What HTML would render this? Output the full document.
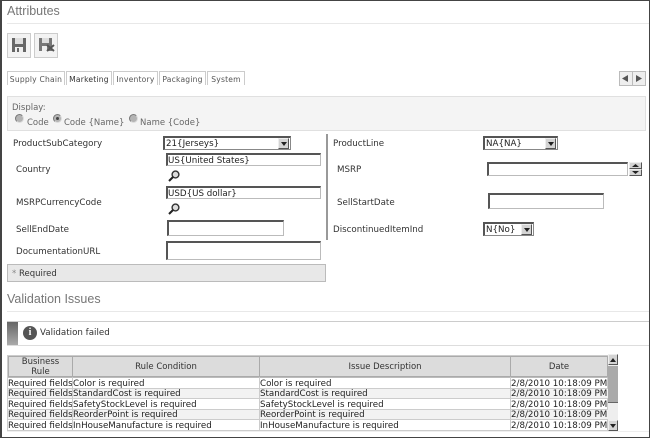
<!DOCTYPE html>
<html><head><meta charset="utf-8"><style>
html,body{margin:0;padding:0;background:#fff}
#p{position:relative;width:650px;height:438px;overflow:hidden;background:#fff;font-family:"DejaVu Sans","Liberation Sans",sans-serif;font-size:8.5px;color:#333;filter:blur(.3px)}
#p div,#p span.t,#p svg{position:absolute;box-sizing:border-box}
.t{position:absolute;white-space:nowrap;line-height:11px}
.h{position:absolute;font-size:12.5px;color:#777;font-family:"Liberation Sans",sans-serif;font-weight:normal;white-space:nowrap;line-height:14px}
.l{color:#333;font-size:8.7px}
.in{background:#fff;border:1px solid #bbb;border-top:2px solid #555;border-left:2px solid #555;font-size:8.7px;line-height:12px;color:#222;white-space:nowrap}
.sel{background:#fff;border:1px solid #888;border-top:2px solid #555;border-left:2px solid #555;font-size:8.7px;line-height:13px;color:#222;padding-left:1px;white-space:nowrap}
.ar{background:#d4d4d4;border:1px solid;border-color:#eee #555 #555 #eee}
.tab{background:#fff;border:1px solid #ccc;border-bottom:0;height:14px;font-size:7.6px;line-height:16px;color:#555;text-align:center;top:71px;letter-spacing:.2px;white-space:nowrap}
.rad{width:9px;height:9px;border-radius:50%;background:#b4b4b4;border:1px solid #777;border-right-color:#ddd;border-bottom-color:#ddd}
.c{font-size:8.7px;line-height:10.5px;color:#222;white-space:nowrap;overflow:hidden}
.hd{background:#dcdcdc;border:1px solid #aaa;font-size:8.5px;line-height:10px;color:#333;text-align:center}
</style></head><body><div id="p">

<div style="left:0;top:0;width:650px;height:1px;background:#444"></div>
<div style="left:0;top:0;width:2px;height:438px;background:#444"></div>
<div style="left:649px;top:0;width:1px;height:438px;background:#444"></div>
<div style="left:0;top:437px;width:650px;height:1px;background:#444"></div>

<span class="h" style="left:7px;top:4px">Attributes</span>
<div style="left:7px;top:23px;width:642px;height:1px;background:#e8e8e8"></div>

<div style="left:7px;top:33px;width:24px;height:25px;background:#f3f3f3;border:1px solid #ccc"></div>
<div style="left:34px;top:33px;width:24px;height:25px;background:#f3f3f3;border:1px solid #ccc"></div>
<svg style="left:12px;top:38px" width="14" height="14" viewBox="0 0 14 14"><path d="M0 0H14V14H0Z" fill="#666"/><path d="M3 0H11V6H3Z" fill="#ddd"/><path d="M3 9H11V14H3Z" fill="#eee"/><path d="M5 10H7V14H5Z" fill="#666"/></svg>
<svg style="left:39px;top:38px" width="16" height="15" viewBox="0 0 16 15"><path d="M0 0H13V13H0Z" fill="#777"/><path d="M3 0H10V5H3Z" fill="#ddd"/><path d="M3 8H8V13H3Z" fill="#eee"/><path d="M8 7L15 13M15 7L8 13" stroke="#555" stroke-width="2"/></svg>

<div class="tab" style="left:7px;width:58px">Supply Chain</div>
<div class="tab" style="left:66px;width:46px;color:#333">Marketing</div>
<div class="tab" style="left:113px;width:45px">Inventory</div>
<div class="tab" style="left:159px;width:47px">Packaging</div>
<div class="tab" style="left:207px;width:38px">System</div>

<div style="left:619px;top:71px;width:14px;height:15px;background:#eee;border:1px solid #bbb"></div>
<div style="left:632px;top:71px;width:14px;height:15px;background:#eee;border:1px solid #bbb"></div>
<svg style="left:622px;top:75px" width="22" height="8" viewBox="0 0 22 8"><path d="M6 0V7L0 3.500Z" fill="#555"/><path d="M14 0V7L20 3.500Z" fill="#555"/></svg>

<div style="left:7px;top:96px;width:639px;height:35px;background:#f4f4f4;border:1px solid #e0e0e0"></div>
<span class="t" style="left:12px;top:103px;color:#666;font-size:8.5px">Display:</span>
<div class="rad" style="left:15px;top:114px"></div>
<span class="t" style="left:27px;top:118px;color:#666;font-size:8.5px">Code</span>
<div class="rad" style="left:53px;top:114px"></div><div style="left:56px;top:117px;width:3px;height:3px;background:#444;border-radius:50%"></div>
<span class="t" style="left:64px;top:118px;color:#666;font-size:8.5px">Code {Name}</span>
<div class="rad" style="left:129px;top:114px"></div>
<span class="t" style="left:140px;top:118px;color:#666;font-size:8.5px">Name {Code}</span>

<span class="t l" style="left:13px;top:139px">ProductSubCategory</span>
<div class="sel" style="left:163px;top:136px;width:128px;height:14px">21{Jerseys}</div>
<div class="ar" style="left:278px;top:138px;width:11px;height:11px"></div>
<svg style="left:281px;top:142px" width="6" height="4"><path d="M0 0H6L3 4Z" fill="#222"/></svg>

<span class="t l" style="left:16px;top:165px">Country</span>
<div class="in" style="left:166px;top:153px;width:155px;height:13px">US{United States}</div>
<svg style="left:168px;top:170px" width="12" height="12" viewBox="0 0 12 12"><circle cx="7.500" cy="4.500" r="3.400" fill="#ddd" stroke="#333" stroke-width="1.400"/><path d="M5 7L1 11" stroke="#222" stroke-width="2"/></svg>

<span class="t l" style="left:16px;top:198px">MSRPCurrencyCode</span>
<div class="in" style="left:166px;top:186px;width:155px;height:13px">USD{US dollar}</div>
<svg style="left:168px;top:203px" width="12" height="12" viewBox="0 0 12 12"><circle cx="7.500" cy="4.500" r="3.400" fill="#ddd" stroke="#333" stroke-width="1.400"/><path d="M5 7L1 11" stroke="#222" stroke-width="2"/></svg>

<span class="t l" style="left:16px;top:225px">SellEndDate</span>
<div class="in" style="left:167px;top:220px;width:117px;height:16px"></div>

<span class="t l" style="left:16px;top:247px">DocumentationURL</span>
<div class="in" style="left:166px;top:241px;width:155px;height:19px"></div>

<div style="left:7px;top:264px;width:319px;height:18px;background:#e8e8e8;border:1px solid #bbb"></div>
<span class="t" style="left:12px;top:269px;font-size:8.5px;color:#333"><span style="color:#888">*</span> Required</span>

<div style="left:326px;top:134px;width:2px;height:106px;background:#999"></div>

<span class="t l" style="left:333px;top:139px">ProductLine</span>
<div class="sel" style="left:483px;top:136px;width:75px;height:14px">NA{NA}</div>
<div class="ar" style="left:545px;top:138px;width:11px;height:11px"></div>
<svg style="left:548px;top:142px" width="6" height="4"><path d="M0 0H6L3 4Z" fill="#222"/></svg>

<span class="t l" style="left:337px;top:165px">MSRP</span>
<div class="in" style="left:487px;top:162px;width:141px;height:14px"></div>
<div class="ar" style="left:629px;top:162px;width:13px;height:7px"></div>
<div class="ar" style="left:629px;top:169px;width:13px;height:7px"></div>
<svg style="left:632px;top:164px" width="8" height="11"><path d="M0 3L3.500 0L7 3Z" fill="#222"/><path d="M0 7H7L3.500 10Z" fill="#222"/></svg>

<span class="t l" style="left:337px;top:198px">SellStartDate</span>
<div class="in" style="left:488px;top:193px;width:116px;height:16px"></div>

<span class="t l" style="left:333px;top:225px">DiscontinuedItemInd</span>
<div class="sel" style="left:483px;top:222px;width:51px;height:14px">N{No}</div>
<div class="ar" style="left:521px;top:224px;width:11px;height:11px"></div>
<svg style="left:524px;top:228px" width="6" height="4"><path d="M0 0H6L3 4Z" fill="#222"/></svg>

<span class="h" style="left:7px;top:292px">Validation Issues</span>
<div style="left:7px;top:311px;width:642px;height:1px;background:#e8e8e8"></div>

<div style="left:7px;top:321px;width:642px;height:25px;background:#fff;border-top:1px solid #ccc;border-bottom:1px solid #ddd"></div>
<div style="left:7px;top:322px;width:11px;height:23px;background:linear-gradient(#666,#aaa)"></div>
<div style="left:23px;top:326px;width:14px;height:14px;background:#555;border-radius:50%;color:#fff;font:bold 10px/14px 'Liberation Serif',serif;text-align:center">i</div>
<span class="t" style="left:40px;top:328px;font-size:8.7px;color:#333">Validation failed</span>

<div style="left:7px;top:355px;width:601px;height:76px;background:#fff;border:1px solid #ccc"></div>
<div class="hd" style="left:8px;top:356px;width:65px;height:21px">Business<br>Rule</div>
<div class="hd" style="left:72px;top:356px;width:188px;height:21px;line-height:21px">Rule Condition</div>
<div class="hd" style="left:259px;top:356px;width:252px;height:21px;line-height:21px">Issue Description</div>
<div class="hd" style="left:510px;top:356px;width:98px;height:21px;line-height:21px">Date</div>

<div style="left:8px;top:388px;width:600px;height:10px;background:#f2f2f2"></div>
<div style="left:8px;top:409px;width:600px;height:10px;background:#f2f2f2"></div>
<div style="left:8px;top:377px;width:600px;height:1px;background:#bbb"></div>
<div style="left:8px;top:388px;width:600px;height:1px;background:#ccc"></div>
<div style="left:8px;top:398px;width:600px;height:1px;background:#ccc"></div>
<div style="left:8px;top:409px;width:600px;height:1px;background:#ccc"></div>
<div style="left:8px;top:419px;width:600px;height:1px;background:#ccc"></div>
<div style="left:72px;top:377px;width:1px;height:53px;background:#ccc"></div>
<div style="left:259px;top:377px;width:1px;height:53px;background:#ccc"></div>
<div style="left:510px;top:377px;width:1px;height:53px;background:#ccc"></div>

<div class="c" style="left:8px;top:379px;width:64px">Required fields</div>
<div class="c" style="left:73px;top:379px;width:186px">Color is required</div>
<div class="c" style="left:260px;top:379px;width:250px">Color is required</div>
<div class="c" style="left:511px;top:379px;width:97px">2/8/2010 10:18:09 PM</div>
<div class="c" style="left:8px;top:389px;width:64px">Required fields</div>
<div class="c" style="left:73px;top:389px;width:186px">StandardCost is required</div>
<div class="c" style="left:260px;top:389px;width:250px">StandardCost is required</div>
<div class="c" style="left:511px;top:389px;width:97px">2/8/2010 10:18:09 PM</div>
<div class="c" style="left:8px;top:400px;width:64px">Required fields</div>
<div class="c" style="left:73px;top:400px;width:186px">SafetyStockLevel is required</div>
<div class="c" style="left:260px;top:400px;width:250px">SafetyStockLevel is required</div>
<div class="c" style="left:511px;top:400px;width:97px">2/8/2010 10:18:09 PM</div>
<div class="c" style="left:8px;top:410px;width:64px">Required fields</div>
<div class="c" style="left:73px;top:410px;width:186px">ReorderPoint is required</div>
<div class="c" style="left:260px;top:410px;width:250px">ReorderPoint is required</div>
<div class="c" style="left:511px;top:410px;width:97px">2/8/2010 10:18:09 PM</div>
<div class="c" style="left:8px;top:421px;width:64px;height:11px">Required fields</div>
<div class="c" style="left:73px;top:421px;width:186px;height:11px">InHouseManufacture is required</div>
<div class="c" style="left:260px;top:421px;width:250px;height:11px">InHouseManufacture is required</div>
<div class="c" style="left:511px;top:421px;width:97px;height:11px">2/8/2010 10:18:09 PM</div>

<div style="left:608px;top:354px;width:10px;height:76px;background:#eee"></div>
<div class="ar" style="left:608px;top:354px;width:10px;height:11px"></div>
<div style="left:608px;top:366px;width:10px;height:37px;background:#aaa;border-bottom:1px solid #666"></div>
<div class="ar" style="left:608px;top:420px;width:10px;height:11px"></div>
<svg style="left:610px;top:358px" width="6" height="4"><path d="M0 4H6L3 0Z" fill="#222"/></svg>
<svg style="left:610px;top:424px" width="6" height="4"><path d="M0 0H6L3 4Z" fill="#222"/></svg>
<div style="left:7px;top:431px;width:642px;height:1px;background:#eee"></div>
</div></body></html>
